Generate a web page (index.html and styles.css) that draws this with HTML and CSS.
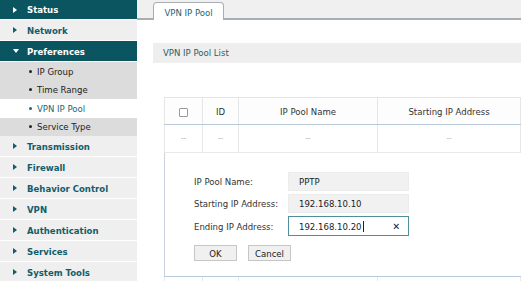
FILE: index.html
```html
<!DOCTYPE html>
<html lang="en">

<head>
    <meta charset="UTF-8">
    <meta name="viewport" content="width=device-width, initial-scale=1.0">
    <title>VPN IP Pool</title>
    <link rel="stylesheet" href="styles.css">
</head>

<body>
    <div class="app">
        <nav class="sidebar">
            <div class="nav-item dark"><span class="caret"></span>Status</div>
            <div class="nav-item"><span class="caret"></span>Network</div>
            <div class="nav-item dark"><span class="caret down"></span>Preferences</div>
            <div class="sub-item"><span class="dot"></span>IP Group</div>
            <div class="sub-item"><span class="dot"></span>Time Range</div>
            <div class="sub-item active"><span class="dot"></span>VPN IP Pool</div>
            <div class="sub-item"><span class="dot"></span>Service Type</div>
            <div class="nav-item"><span class="caret"></span>Transmission</div>
            <div class="nav-item"><span class="caret"></span>Firewall</div>
            <div class="nav-item"><span class="caret"></span>Behavior Control</div>
            <div class="nav-item"><span class="caret"></span>VPN</div>
            <div class="nav-item"><span class="caret"></span>Authentication</div>
            <div class="nav-item"><span class="caret"></span>Services</div>
            <div class="nav-item"><span class="caret"></span>System Tools</div>
        </nav>

        <main class="content">
            <div class="tabbar">
                <div class="tab">VPN IP Pool</div>
            </div>

            <section class="panel">
                <div class="panel-title">VPN IP Pool List</div>

                <table class="grid">
                    <colgroup>
                        <col class="c-check">
                        <col class="c-id">
                        <col class="c-name">
                        <col class="c-start">
                        <col class="c-end">
                    </colgroup>
                    <thead>
                        <tr>
                            <th><span class="checkbox"></span></th>
                            <th>ID</th>
                            <th>IP Pool Name</th>
                            <th>Starting IP Address</th>
                            <th></th>
                        </tr>
                    </thead>
                    <tbody>
                        <tr class="empty-row">
                            <td>--</td>
                            <td>--</td>
                            <td>--</td>
                            <td>--</td>
                            <td></td>
                        </tr>
                        <tr class="edit-row">
                            <td colspan="5">
                                <form class="edit-form">
                                    <div class="field">
                                        <label>IP Pool Name:</label>
                                        <div class="input">PPTP</div>
                                    </div>
                                    <div class="field">
                                        <label>Starting IP Address:</label>
                                        <div class="input">192.168.10.10</div>
                                    </div>
                                    <div class="field">
                                        <label>Ending IP Address:</label>
                                        <div class="input focus"><span class="caret-text">192.168.10.20</span><span class="clear">&#x2715;</span></div>
                                    </div>
                                    <div class="buttons">
                                        <button type="button" class="btn btn-ok">OK</button>
                                        <button type="button" class="btn">Cancel</button>
                                    </div>
                                </form>
                            </td>
                        </tr>
                        <tr class="blank-row">
                            <td></td>
                            <td></td>
                            <td></td>
                            <td></td>
                            <td></td>
                        </tr>
                    </tbody>
                </table>
            </section>
        </main>
    </div>
</body>

</html>
```

FILE: styles.css
```css
body {
    margin: 0;
    width: 521px;
    height: 281px;
    overflow: hidden;
    font-family: "DejaVu Sans Condensed", "DejaVu Sans", sans-serif;
    font-size: 9.5px;
    color: #333;
    background: #fff;
}

.app {
    display: flex;
    height: 281px;
}

/* sidebar */

.sidebar {
    width: 137px;
    flex: none;
    display: flex;
    flex-direction: column;
    background: #efefef;
}

.nav-item {
    flex: none;
    height: 20px;
    border-bottom: 1px solid #fff;
    display: flex;
    align-items: center;
    padding-left: 13px;
    font-weight: bold;
    color: #135d6b;
}

.nav-item:first-child {
    height: 19px;
}

.nav-item.dark {
    background: #0b5561;
    color: #fff;
}

.caret {
    width: 0;
    height: 0;
    border-left: 4px solid currentColor;
    border-top: 3px solid transparent;
    border-bottom: 3px solid transparent;
    margin-right: 10px;
}

.caret.down {
    border-top: 4px solid currentColor;
    border-left: 3px solid transparent;
    border-right: 3px solid transparent;
    border-bottom: 0;
    margin-right: 8px;
}

.sub-item {
    flex: none;
    height: 18.5px;
    display: flex;
    align-items: center;
    padding-left: 29px;
    background: #dcdcdc;
    color: #222;
}

.sub-item.active {
    background: #fff;
    color: #1b6577;
}

.dot {
    width: 3px;
    height: 3px;
    border-radius: 50%;
    background: currentColor;
    margin-right: 5px;
}

/* content */

.content {
    flex: 1;
    min-width: 0;
    overflow: hidden;
}

.tabbar {
    height: 18px;
    display: flex;
    align-items: flex-end;
    padding-left: 16px;
    background: #f0f0f0;
    border-bottom: 2px solid #a7aeb3;
}

.tab {
    width: 69px;
    height: 17px;
    margin-bottom: -2px;
    border: 1px solid #a7aeb3;
    border-bottom: 0;
    border-radius: 4px 4px 0 0;
    background: #fff;
    color: #1b6577;
    text-align: center;
    line-height: 19px;
}

.panel {
    padding: 23px 0 0 16px;
}

.panel-title {
    height: 20px;
    line-height: 20px;
    padding-left: 10px;
    background: #eeeeee;
    color: #2b5d6a;
}

/* table */

.grid {
    margin: 34px 0 0 11px;
    width: 500px;
    table-layout: fixed;
    border-collapse: collapse;
}

.c-check { width: 38px; }
.c-id { width: 36px; }
.c-name { width: 139px; }
.c-start { width: 143px; }
.c-end { width: 144px; }

.grid th {
    height: 26px;
    padding: 0;
    font-weight: normal;
    color: #333;
    background: #fdfdfd;
    border: 1px solid #e6e6e6;
    border-bottom: 1px solid #b9cbdb;
}

.checkbox {
    display: inline-block;
    width: 7px;
    height: 7px;
    border: 1px solid #999;
    border-radius: 1px;
    background: #fff;
    vertical-align: middle;
}

.grid td {
    height: 27px;
    padding: 0;
    text-align: center;
    border: 1px solid #e8e8e8;
}

.empty-row td {
    color: #b5b5b5;
    font-size: 8px;
}

.edit-row td {
    height: auto;
    text-align: left;
    border-left: 1px solid #c9d4de;
    border-bottom: 1px solid #b9cbdb;
}

/* edit form */

.edit-form {
    padding: 19px 0 15px 29px;
    display: flex;
    flex-direction: column;
    gap: 3px;
}

.field {
    display: flex;
    align-items: center;
}

.field label {
    width: 94px;
}

.input {
    width: 104px;
    height: 17px;
    padding: 0 5px 0 10px;
    display: flex;
    align-items: center;
    justify-content: space-between;
    background: #f1f1f1;
    border: 1px solid #ececec;
    color: #222;
}

.input.focus {
    height: 18px;
    background: #fff;
    border-color: #4e8f9b;
}

.caret-text {
    border-right: 1px solid #222;
    padding-right: 1px;
}

.clear {
    font-size: 10px;
    font-weight: bold;
    color: #222;
    margin-right: 3px;
}

.buttons {
    display: flex;
    gap: 11px;
    margin-top: 6px;
}

.btn {
    width: 43px;
    height: 16px;
    padding: 0;
    font: inherit;
    color: #222;
    background: #f0f0f0;
    border: 1px solid #c6c6c6;
    border-radius: 0;
}

.blank-row td {
    height: 10px;
    border-bottom: 0;
}
```
